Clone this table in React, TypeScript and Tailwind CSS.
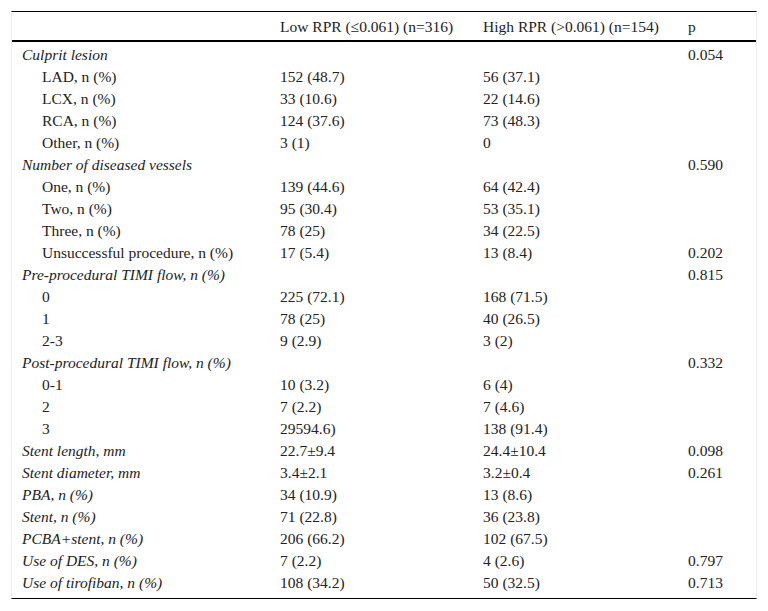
import React from "react";

type Row = { label: string; italic?: boolean; indent?: boolean; a?: string; b?: string; p?: string };

const rows: Row[] = [
  { label: "Culprit lesion", italic: true, p: "0.054" },
  { label: "LAD, n (%)", indent: true, a: "152 (48.7)", b: "56 (37.1)" },
  { label: "LCX, n (%)", indent: true, a: "33 (10.6)", b: "22 (14.6)" },
  { label: "RCA, n (%)", indent: true, a: "124 (37.6)", b: "73 (48.3)" },
  { label: "Other, n (%)", indent: true, a: "3 (1)", b: "0" },
  { label: "Number of diseased vessels", italic: true, p: "0.590" },
  { label: "One, n (%)", indent: true, a: "139 (44.6)", b: "64 (42.4)" },
  { label: "Two, n (%)", indent: true, a: "95 (30.4)", b: "53 (35.1)" },
  { label: "Three, n (%)", indent: true, a: "78 (25)", b: "34 (22.5)" },
  { label: "Unsuccessful procedure, n (%)", indent: true, a: "17 (5.4)", b: "13 (8.4)", p: "0.202" },
  { label: "Pre-procedural TIMI flow, n (%)", italic: true, p: "0.815" },
  { label: "0", indent: true, a: "225 (72.1)", b: "168 (71.5)" },
  { label: "1", indent: true, a: "78 (25)", b: "40 (26.5)" },
  { label: "2-3", indent: true, a: "9 (2.9)", b: "3 (2)" },
  { label: "Post-procedural TIMI flow, n (%)", italic: true, p: "0.332" },
  { label: "0-1", indent: true, a: "10 (3.2)", b: "6 (4)" },
  { label: "2", indent: true, a: "7 (2.2)", b: "7 (4.6)" },
  { label: "3", indent: true, a: "29594.6)", b: "138 (91.4)" },
  { label: "Stent length, mm", italic: true, a: "22.7±9.4", b: "24.4±10.4", p: "0.098" },
  { label: "Stent diameter, mm", italic: true, a: "3.4±2.1", b: "3.2±0.4", p: "0.261" },
  { label: "PBA, n (%)", italic: true, a: "34 (10.9)", b: "13 (8.6)" },
  { label: "Stent, n (%)", italic: true, a: "71 (22.8)", b: "36 (23.8)" },
  { label: "PCBA+stent, n (%)", italic: true, a: "206 (66.2)", b: "102 (67.5)" },
  { label: "Use of DES, n (%)", italic: true, a: "7 (2.2)", b: "4 (2.6)", p: "0.797" },
  { label: "Use of tirofiban, n (%)", italic: true, a: "108 (34.2)", b: "50 (32.5)", p: "0.713" },
];

export default function App() {
  return (
    <div className="w-[768px] h-[611px] bg-white pt-[11px] pl-[11px] text-[#222] text-[15.5px] leading-[22px]" style={{ fontFamily: '"Liberation Serif", "Times New Roman", serif' }}>
      <div className="w-[746px] border-t border-b border-black border-l border-r border-l-[#eee] border-r-[#eee]">
        <div className="grid grid-cols-[258px_203px_205px_78px] h-[30px] pt-[1px] items-center border-b-2 border-black">
          <div className="pl-[10px]"></div>
          <div className="pl-[10px] whitespace-nowrap">Low RPR (≤0.061) (n=316)</div>
          <div className="pl-[10px] whitespace-nowrap">High RPR (&gt;0.061) (n=154)</div>
          <div className="pl-[10px]">p</div>
        </div>
        <div className="pt-[2px] pb-[4px]">
          {rows.map((r, i) => (
            <div key={i} className="grid grid-cols-[258px_203px_205px_78px] h-[22px] items-center">
              <div className={`${r.indent ? "pl-[30px]" : "pl-[10px]"} ${r.italic ? "italic" : ""} whitespace-nowrap`}>{r.label}</div>
              <div className="pl-[10px] whitespace-nowrap">{r.a ?? ""}</div>
              <div className="pl-[10px] whitespace-nowrap">{r.b ?? ""}</div>
              <div className="pl-[10px] whitespace-nowrap">{r.p ?? ""}</div>
            </div>
          ))}
        </div>
      </div>
    </div>
  );
}
